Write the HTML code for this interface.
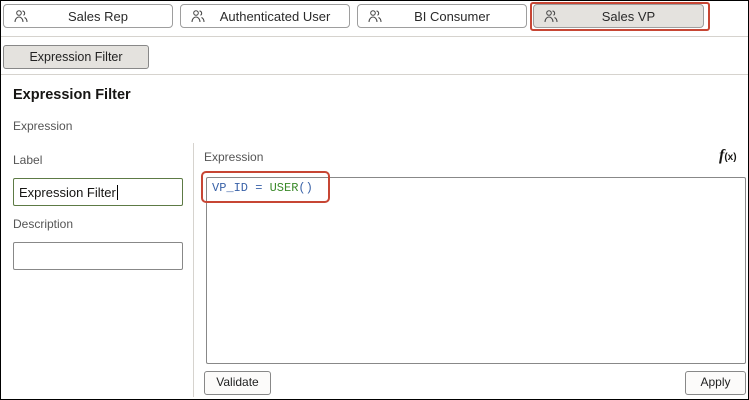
<!DOCTYPE html>
<html><head><style>
*{box-sizing:border-box;margin:0;padding:0}
body{width:749px;height:400px;overflow:hidden;font-family:"Liberation Sans",sans-serif;color:#161513;background:#fff;position:relative}
.frame{position:absolute;left:0;top:0;width:749px;height:400px;border:1px solid #000}
.a{position:absolute}
.tb{position:absolute;top:4px;height:24px;border:1px solid #9e9e9e;border-radius:4px;background:#fff;font-size:13px;color:#2a2a2a}
.tb span{position:absolute;top:4px;left:0;right:0;text-align:center}
.tb svg{position:absolute;left:10px;top:4px}
.hl{position:absolute;left:1px;right:1px;height:1px;background:#d6d3ce}
.lbl{position:absolute;font-size:12px;color:#555}
.inp{position:absolute;border:1px solid #888;border-radius:2px;background:#fff}
.btn{position:absolute;border:1px solid #888;border-radius:3px;background:#fcfbfa;font-size:12px;text-align:center;line-height:21px;color:#222}
</style></head><body>
<div class="tb" style="left:3px;width:170px"><svg width="14" height="14" viewBox="0 0 14 14" fill="none" stroke="#444" stroke-width="1"><circle cx="5" cy="4" r="2.3"/><path d="M1 13c0-3 2-5 4-5s4 2 4 5"/><path d="M8.5 2a2.3 2.3 0 0 1 1 4.3M10.5 8.5c1.5.7 2.5 2.3 2.5 4.5"/></svg><span style="left:20px">Sales Rep</span></div>
<div class="tb" style="left:180px;width:170px"><svg width="14" height="14" viewBox="0 0 14 14" fill="none" stroke="#444" stroke-width="1"><circle cx="5" cy="4" r="2.3"/><path d="M1 13c0-3 2-5 4-5s4 2 4 5"/><path d="M8.5 2a2.3 2.3 0 0 1 1 4.3M10.5 8.5c1.5.7 2.5 2.3 2.5 4.5"/></svg><span style="left:20px">Authenticated User</span></div>
<div class="tb" style="left:357px;width:170px"><svg width="14" height="14" viewBox="0 0 14 14" fill="none" stroke="#444" stroke-width="1"><circle cx="5" cy="4" r="2.3"/><path d="M1 13c0-3 2-5 4-5s4 2 4 5"/><path d="M8.5 2a2.3 2.3 0 0 1 1 4.3M10.5 8.5c1.5.7 2.5 2.3 2.5 4.5"/></svg><span style="left:20px">BI Consumer</span></div>
<div class="tb" style="left:533px;width:171px;background:#e4e2de"><svg width="14" height="14" viewBox="0 0 14 14" fill="none" stroke="#444" stroke-width="1"><circle cx="5" cy="4" r="2.3"/><path d="M1 13c0-3 2-5 4-5s4 2 4 5"/><path d="M8.5 2a2.3 2.3 0 0 1 1 4.3M10.5 8.5c1.5.7 2.5 2.3 2.5 4.5"/></svg><span style="left:20px">Sales VP</span></div>
<div class="a" style="left:530px;top:2px;width:180px;height:29px;border:2px solid #c74634;border-radius:3px"></div>
<div class="hl" style="top:36px"></div>
<div class="btn" style="left:3px;top:45px;width:146px;height:24px;background:#e4e2de;font-size:12.5px;line-height:22px">Expression Filter</div>
<div class="hl" style="top:74px"></div>
<div class="a" style="left:13px;top:87px;font-size:14.5px;font-weight:bold;color:#161513">Expression Filter</div>
<div class="lbl" style="left:13px;top:119px">Expression</div>
<div class="a" style="left:193px;top:143px;width:1px;height:254px;background:#d6d3ce"></div>
<div class="lbl" style="left:13px;top:153px">Label</div>
<div class="inp" style="left:13px;top:178px;width:170px;height:28px;border-color:#5d7a45"><span style="position:absolute;left:5px;top:6px;font-size:13px;color:#161513">Expression Filter<span style="border-left:1px solid #000;margin-left:1px"></span></span></div>
<div class="lbl" style="left:13px;top:217px">Description</div>
<div class="inp" style="left:13px;top:242px;width:170px;height:28px"></div>
<div class="lbl" style="left:204px;top:150px">Expression</div>
<div class="a" style="left:719px;top:147px;font-family:'Liberation Serif',serif;font-style:italic;font-weight:bold;font-size:16px">f<span style="font-style:normal;font-family:'Liberation Sans',sans-serif;font-size:10px">(x)</span></div>
<div class="inp" style="left:206px;top:177px;width:540px;height:187px"></div>
<div class="a" style="left:212px;top:181px;font-family:'Liberation Mono',monospace;font-size:12px"><span style="color:#3a62a8">VP_ID = </span><span style="color:#3b8a2a">USER</span><span style="color:#3a62a8">()</span></div>
<div class="a" style="left:201px;top:171px;width:129px;height:32px;border:2px solid #c74634;border-radius:5px"></div>
<div class="btn" style="left:204px;top:371px;width:67px;height:24px">Validate</div>
<div class="btn" style="left:685px;top:371px;width:61px;height:24px">Apply</div>
<div class="frame"></div>
</body></html>
